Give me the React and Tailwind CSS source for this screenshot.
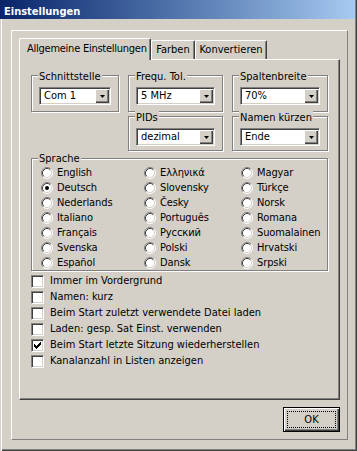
import React from "react";

const CHECK = [
  "......#",
  ".....##",
  "#...###",
  "##.###.",
  "#####..",
  ".###...",
  "..#....",
];

function Radio({ checked }) {
  return (
    <svg width="12" height="12" viewBox="0 0 12 12" className="shrink-0">
      <circle cx="6" cy="6" r="5" fill="#fff" />
      <path d="M2.11 9.89A5.5 5.5 0 0 1 9.89 2.11" fill="none" stroke="#808080" />
      <path d="M9.89 2.11A5.5 5.5 0 0 1 2.11 9.89" fill="none" stroke="#fff" />
      <path d="M2.82 9.18A4.5 4.5 0 0 1 9.18 2.82" fill="none" stroke="#404040" />
      <path d="M9.18 2.82A4.5 4.5 0 0 1 2.82 9.18" fill="none" stroke="#d4d0c8" />
      {checked && <circle cx="6" cy="6" r="2" fill="#000" />}
    </svg>
  );
}

function Check({ checked }) {
  return (
    <div className="flex h-[13px] w-[13px] shrink-0 items-center justify-center border border-t-[#808080] border-l-[#808080] border-b-white border-r-white bg-white shadow-[inset_1px_1px_#404040,inset_-1px_-1px_#d4d0c8]">
      {checked && (
        <svg width="7" height="7" viewBox="0 0 7 7">
          {CHECK.flatMap((row, y) =>
            row.split("").map((c, x) =>
              c === "#" ? <rect key={x + "-" + y} x={x} y={y} width="1" height="1" fill="#000" /> : null
            )
          )}
        </svg>
      )}
    </div>
  );
}

function Combo({ value }) {
  return (
    <div className="flex h-[18px] items-stretch border border-t-[#808080] border-l-[#808080] border-b-white border-r-white bg-white p-px shadow-[inset_1px_1px_#404040,inset_-1px_-1px_#d4d0c8]">
      <span className="flex-1 pl-[3px] leading-[14px] whitespace-nowrap">{value}</span>
      <div className="flex w-[14px] items-center justify-center bg-[#d4d0c8] shadow-[inset_1px_1px_#fff,inset_-1px_-1px_#404040,inset_-2px_-2px_#808080]">
        <svg width="5" height="3" viewBox="0 0 5 3">
          <polygon points="0,0 5,0 2.5,3" fill="#000" />
        </svg>
      </div>
    </div>
  );
}

function Group({ label, className, labelTop, children }) {
  return (
    <div className={"relative border border-[#808080] shadow-[inset_1px_1px_#fff,1px_1px_#fff] " + className}>
      <span className={"absolute left-[6px] bg-[#d4d0c8] px-px leading-[14px] whitespace-nowrap " + labelTop}>{label}</span>
      {children}
    </div>
  );
}

const COLS = [
  ["English", "Deutsch", "Nederlands", "Italiano", "Français", "Svenska", "Español"],
  ["Ελληνικά", "Slovensky", "Česky", "Português", "Русский", "Polski", "Dansk"],
  ["Magyar", "Türkçe", "Norsk", "Romana", "Suomalainen", "Hrvatski", "Srpski"],
];

const CHECKS = [
  ["Immer im Vordergrund", false],
  ["Namen: kurz", false],
  ["Beim Start zuletzt verwendete Datei laden", false],
  ["Laden: gesp. Sat Einst. verwenden", false],
  ["Beim Start letzte Sitzung wiederherstellen", true],
  ["Kanalanzahl in Listen anzeigen", false],
];

export default function App() {
  const rows = [];
  for (let r = 0; r < 7; r++) {
    for (let c = 0; c < 3; c++) {
      const name = COLS[c][r];
      rows.push(
        <div key={c + "-" + r} className="flex h-[15px] items-center gap-[4px]">
          <Radio checked={name === "Deutsch"} />
          <span className="leading-[14px] tracking-[-0.1px] whitespace-nowrap">{name}</span>
        </div>
      );
    }
  }

  return (
    <div className="flex h-[451px] w-[357px] flex-col bg-[#d4d0c8] font-['DejaVu_Sans_Condensed','Liberation_Sans',sans-serif] text-[11px] text-black shadow-[inset_1px_0_#d4d0c8,inset_2px_0_#fff,inset_-1px_-1px_#404040,inset_-2px_-2px_#808080]">
      <div className="h-[19px] w-[355px] shrink-0 bg-linear-to-r from-[#0a246a] to-[#a6caf0] pl-[4px] pt-[5px]">
        <span className="block font-bold leading-[14px] text-white">Einstellungen</span>
      </div>

      <div className="ml-[11px] mr-[9px] mt-[11px] flex h-[410px] flex-col border border-t-white border-l-white border-r-[#808080] border-b-[#808080] px-[7px] pt-[7px]">
        <div className="flex h-[21px] items-end">
          <div className="relative z-10 -mb-px h-[22px] w-[132px] rounded-t-[2px] border border-b-0 border-t-white border-l-white border-r-[#404040] bg-[#d4d0c8] pl-[7px] pt-[2px] whitespace-nowrap shadow-[inset_-1px_0_#808080]">
            <span className="leading-[14px] tracking-[-0.25px]">Allgemeine Einstellungen</span>
          </div>
          <div className="h-[19px] w-[44px] rounded-t-[2px] border border-b-0 border-t-white border-l-white border-r-[#404040] pt-[1px] text-center whitespace-nowrap shadow-[inset_-1px_0_#808080]">
            <span className="leading-[14px]">Farben</span>
          </div>
          <div className="h-[19px] w-[72px] rounded-t-[2px] border border-b-0 border-t-white border-l-white border-r-[#404040] pt-[1px] text-center whitespace-nowrap shadow-[inset_-1px_0_#808080]">
            <span className="leading-[14px]">Konvertieren</span>
          </div>
        </div>

        <div className="flex h-[341px] flex-col border border-t-white border-l-white border-r-[#404040] border-b-[#404040] pl-[11px] pt-[15px] shadow-[inset_-1px_-1px_#808080]">
          <div className="flex gap-[9px]">
            <Group label="Schnittstelle" labelTop="top-[-6px]" className="h-[37px] w-[88px] px-[7px] pt-[11px]">
              <Combo value="Com 1" />
            </Group>
            <Group label="Frequ. Tol." labelTop="top-[-6px]" className="h-[37px] w-[95px] px-[7px] pt-[11px]">
              <Combo value="5 MHz" />
            </Group>
            <Group label="Spaltenbreite" labelTop="top-[-6px]" className="h-[37px] w-[96px] px-[7px] pt-[11px]">
              <Combo value="70%" />
            </Group>
          </div>

          <div className="ml-[97px] mt-[4px] flex gap-[9px]">
            <Group label="PIDs" labelTop="top-[-6px]" className="h-[35px] w-[95px] px-[7px] pt-[11px]">
              <Combo value="dezimal" />
            </Group>
            <Group label="Namen kürzen" labelTop="top-[-6px]" className="h-[35px] w-[96px] px-[7px] pt-[11px]">
              <Combo value="Ende" />
            </Group>
          </div>

          <Group label="Sprache" labelTop="top-[-7px]" className="mt-[7px] h-[113px] w-[297px] pl-[9px] pt-[6px]">
            <div className="grid grid-cols-[103px_97px_1fr]">{rows}</div>
          </Group>

          <div className="mt-[2px] flex flex-col">
            {CHECKS.map(([label, checked]) => (
              <div key={label} className="flex h-[16px] items-center gap-[6px]">
                <Check checked={checked} />
                <span className="leading-[14px] whitespace-nowrap">{label}</span>
              </div>
            ))}
          </div>
        </div>

        <div className="mt-[7px] flex justify-end">
          <div className="flex h-[25px] w-[57px] border border-black bg-[#d4d0c8] p-[3px] shadow-[inset_1px_1px_#fff,inset_-1px_-1px_#404040,inset_-2px_-2px_#808080]">
            <div className="flex flex-1 items-center justify-center border border-dotted border-black">
              <span className="leading-[14px]">OK</span>
            </div>
          </div>
        </div>
      </div>
    </div>
  );
}
